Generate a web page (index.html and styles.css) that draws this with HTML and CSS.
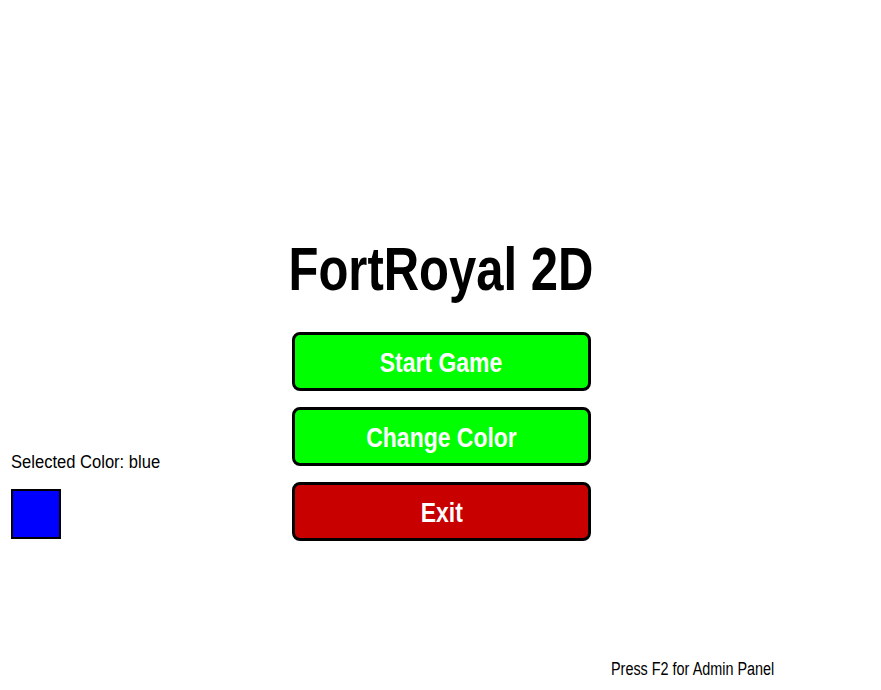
FILE: index.html
```html
<!DOCTYPE html>
<html>
<head>
<meta charset="utf-8">
<link rel="stylesheet" href="styles.css">
</head>
<body>
<div class="screen">
  <h1 class="title"><span class="narrow title-text">FortRoyal 2D</span></h1>
  <div class="side">
    <div class="side-label"><span class="narrow label-text">Selected Color: blue</span></div>
    <div class="swatch"></div>
  </div>
  <div class="buttons">
    <div class="btn btn-green"><span class="narrow btn-text">Start Game</span></div>
    <div class="btn btn-green"><span class="narrow btn-text">Change Color</span></div>
    <div class="btn btn-red"><span class="narrow btn-text">Exit</span></div>
  </div>
  <div class="hint"><span class="narrow hint-text">Press F2 for Admin Panel</span></div>
</div>
</body>
</html>
```
FILE: styles.css
```css
html, body {
  margin: 0;
  padding: 0;
  background: #ffffff;
}
.screen {
  width: 881px;
  height: 690px;
  display: grid;
  grid-template-columns: 292px 299px 1fr;
  grid-template-rows: 332px 209px 1fr;
  font-family: "Liberation Sans", Arial, sans-serif;
  color: #000;
}
.narrow {
  display: inline-block;
  white-space: nowrap;
}
.title {
  grid-column: 1 / 4;
  grid-row: 1;
  margin: 0;
  padding-top: 233px;
  text-align: center;
  font-size: 62px;
  line-height: 72px;
  font-weight: bold;
}
.title-text {
  transform: scaleX(0.79);
  transform-origin: 50% 50%;
}
.side {
  grid-column: 1;
  grid-row: 2;
  padding-left: 11px;
  padding-top: 120px;
  display: flex;
  flex-direction: column;
  gap: 17px;
}
.side-label {
  font-size: 18px;
  line-height: 20px;
}
.label-text {
  transform: scaleX(0.92);
  transform-origin: 0 50%;
}
.swatch {
  width: 46px;
  height: 46px;
  background: #0000ff;
  border: 2px solid #000;
}
.buttons {
  grid-column: 2;
  grid-row: 2;
  display: flex;
  flex-direction: column;
  gap: 16px;
}
.btn {
  box-sizing: border-box;
  height: 59px;
  padding-top: 4px;
  border: 3px solid #000;
  border-radius: 8px;
  color: #fff;
  font-weight: bold;
  font-size: 27px;
  display: flex;
  align-items: center;
  justify-content: center;
}
.btn-text {
  transform: scaleX(0.85);
  transform-origin: 50% 50%;
}
.btn-green { background: #00ff00; }
.btn-red { background: #c80000; }
.hint {
  grid-column: 3;
  grid-row: 3;
  padding-left: 20px;
  padding-top: 118px;
  font-size: 18px;
  line-height: 20px;
}
.hint-text {
  transform: scaleX(0.80);
  transform-origin: 0 50%;
}
```
